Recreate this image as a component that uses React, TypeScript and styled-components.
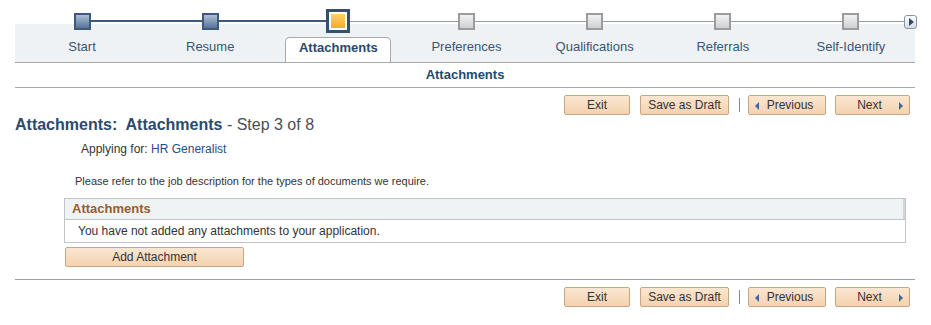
import React from 'react';
import styled, { createGlobalStyle, css } from 'styled-components';

const GlobalStyle = createGlobalStyle`
    body {
        margin: 0;
        background: #fff;
        font-family: "Liberation Sans", Arial, sans-serif;
        color: #333;
    }
`;

type StepState = 'done' | 'active' | 'pending';

const steps = ['Start', 'Resume', 'Attachments', 'Preferences', 'Qualifications', 'Referrals', 'Self-Identify'];
const activeIndex = 2;

const Page = styled.div`
    padding: 0 16px 0 15px;
`;

const StepNav = styled.nav`
    position: relative;
    background: linear-gradient(to bottom, #fff 24px, #eff2f4 24px);
    border-bottom: 1px solid #a9a9a9;
`;

const StepGrid = styled.div`
    display: grid;
    grid-template-columns: repeat(7, 1fr);
    padding-left: 3px;
`;

const Track = styled(StepGrid)`
    padding-top: 9px;
    height: 24px;
`;

const lineDone = css`
    height: 2px;
    background: #3d5a7c;
    margin-top: -1px;
`;

const linePending = css`
    height: 1px;
    background: #9a9a9a;
`;

const TrackCell = styled.div<{ $left?: StepState; $right?: StepState }>`
    position: relative;
    display: flex;
    align-items: center;
    justify-content: center;

    &::before,
    &::after {
        content: '';
        position: absolute;
        top: 50%;
    }

    &::before {
        left: 0;
        right: 50%;
        ${({ $left }) => ($left ? ($left === 'done' ? lineDone : linePending) : 'display: none;')}
    }

    &::after {
        left: 50%;
        right: 0;
        ${({ $right }) => ($right === 'done' ? lineDone : linePending)}
    }
`;

const Square = styled.span<{ $state: StepState }>`
    position: relative;
    z-index: 1;
    box-sizing: border-box;
    width: 17px;
    height: 17px;
    border: 2px solid #9c9c9c;
    background: linear-gradient(#f1f2f3, #cdd0d4);

    ${({ $state }) => $state === 'done' && css`
        border-color: #3d5a7c;
        background: linear-gradient(#aebfd4, #56729a);
    `}

    ${({ $state }) => $state === 'active' && css`
        width: 24px;
        height: 24px;
        border: 3px solid #34506e;
        background: linear-gradient(#ffd874, #f6a31f);
        box-shadow: inset 0 0 0 2px #fff;
    `}
`;

const ScrollArrow = styled.span`
    position: absolute;
    top: 15px;
    right: -2px;
    z-index: 2;
    box-sizing: border-box;
    width: 13px;
    height: 14px;
    border: 1px solid #8a95a4;
    border-radius: 3px;
    background: linear-gradient(#ffffff, #d5dbe2);
    display: flex;
    align-items: center;
    justify-content: center;

    &::after {
        content: '';
        border-left: 5px solid #2e4b6e;
        border-top: 4px solid transparent;
        border-bottom: 4px solid transparent;
        margin-left: 1px;
    }
`;

const Labels = styled(StepGrid)`
    height: 29px;
    align-items: end;
`;

const Label = styled.div<{ $active?: boolean }>`
    justify-self: center;
    box-sizing: border-box;
    height: 25px;
    line-height: 19px;
    font-size: 13px;
    color: #3a5574;
    text-align: center;
    white-space: nowrap;

    ${({ $active }) => $active && css`
        width: 106px;
        background: #fff;
        border: 1px solid #a9a9a9;
        border-bottom: none;
        border-radius: 5px 5px 0 0;
        font-weight: bold;
        color: #2b4868;
    `}
`;

const SectionHeader = styled.div`
    height: 24px;
    line-height: 24px;
    text-align: center;
    font-size: 13px;
    font-weight: bold;
    color: #1e4a72;
    border-bottom: 1px solid #a9a9a9;
`;

const ButtonBar = styled.div<{ $top: number }>`
    display: flex;
    justify-content: flex-end;
    align-items: center;
    padding-right: 5px;
    margin-top: ${({ $top }) => $top}px;
`;

const Button = styled.button<{ $width: number; $gap?: number; $pad?: string }>`
    box-sizing: border-box;
    width: ${({ $width }) => $width}px;
    height: 20px;
    margin-left: ${({ $gap }) => $gap ?? 0}px;
    padding: ${({ $pad }) => $pad ?? '0'};
    border: 1px solid #c9a682;
    border-radius: 2px;
    background: linear-gradient(#fbe6d1, #f4d2b0);
    font-family: "Liberation Sans", Arial, sans-serif;
    font-size: 12px;
    color: #333;
    display: flex;
    align-items: center;
    justify-content: center;
    position: relative;
    cursor: pointer;
`;

const Caret = styled.span<{ $dir: 'left' | 'right' }>`
    position: absolute;
    top: 6px;
    ${({ $dir }) => ($dir === 'left' ? 'left: 6px;' : 'right: 6px;')}
    border-top: 4px solid transparent;
    border-bottom: 4px solid transparent;
    ${({ $dir }) => ($dir === 'left' ? 'border-right: 4px solid #3b6aa0;' : 'border-left: 4px solid #3b6aa0;')}
`;

const Divider = styled.span`
    width: 1px;
    height: 14px;
    background: #7d8a99;
    margin: 0 8px 0 10px;
`;

const Title = styled.h1`
    margin: 1px 0 0;
    height: 18px;
    line-height: 18px;
    font-size: 16px;
    font-weight: bold;
    color: #2c4a6e;
`;

const TitleStep = styled.span`
    font-weight: normal;
    color: #4a4f57;
`;

const Applying = styled.div`
    margin-top: 7px;
    padding-left: 66px;
    line-height: 16px;
    font-size: 12px;
    color: #333;
`;

const JobLink = styled.span`
    color: #1f4d86;
`;

const Note = styled.p`
    margin: 17px 0 0;
    padding-left: 60px;
    line-height: 14px;
    font-size: 11px;
    color: #333;
`;

const Grid = styled.div`
    margin: 10px 9px 0 49px;
    border: 1px solid #c2c5c8;
`;

const GridHeader = styled.div`
    height: 20px;
    line-height: 19px;
    padding-left: 7px;
    background: #f0f3f4;
    border-bottom: 1px solid #c2c5c8;
    box-shadow: inset -2px 0 0 #d3d6d9;
    font-size: 13px;
    font-weight: bold;
    color: #9a5b2d;
`;

const GridRow = styled.div`
    height: 22px;
    line-height: 22px;
    padding-left: 13px;
    font-size: 12px;
    color: #333;
`;

const AddRow = styled.div`
    margin: 4px 0 0 50px;
`;

const Rule = styled.hr`
    margin: 12px 0 0;
    border: none;
    border-top: 1px solid #a0a0a0;
`;

const lineState = (i: number): StepState => (i < activeIndex ? 'done' : 'pending');

const Buttons: React.FC<{ top: number }> = ({ top }) => (
    <ButtonBar $top={top}>
        <Button type="button" $width={66}>Exit</Button>
        <Button type="button" $width={89} $gap={10}>Save as Draft</Button>
        <Divider />
        <Button type="button" $width={78} $pad="0 0 0 6px">
            <Caret $dir="left" />
            Previous
        </Button>
        <Button type="button" $width={75} $gap={9} $pad="0 6px 0 0">
            Next
            <Caret $dir="right" />
        </Button>
    </ButtonBar>
);

const App: React.FC = () => (
    <>
        <GlobalStyle />
        <Page>
            <StepNav>
                <Track>
                    {steps.map((step, i) => (
                        <TrackCell
                            key={step}
                            $left={i > 0 ? lineState(i - 1) : undefined}
                            $right={lineState(i)}
                        >
                            <Square $state={i < activeIndex ? 'done' : i === activeIndex ? 'active' : 'pending'} />
                        </TrackCell>
                    ))}
                </Track>
                <ScrollArrow />
                <Labels>
                    {steps.map((step, i) => (
                        <Label key={step} $active={i === activeIndex}>{step}</Label>
                    ))}
                </Labels>
            </StepNav>
            <SectionHeader>Attachments</SectionHeader>
            <Buttons top={7} />
            <Title>
                Attachments:&nbsp; Attachments
                <TitleStep> - Step 3 of 8</TitleStep>
            </Title>
            <Applying>
                Applying for: <JobLink>HR Generalist</JobLink>
            </Applying>
            <Note>Please refer to the job description for the types of documents we require.</Note>
            <Grid>
                <GridHeader>Attachments</GridHeader>
                <GridRow>You have not added any attachments to your application.</GridRow>
            </Grid>
            <AddRow>
                <Button type="button" $width={179}>Add Attachment</Button>
            </AddRow>
            <Rule />
            <Buttons top={7} />
        </Page>
    </>
);

export default App;
